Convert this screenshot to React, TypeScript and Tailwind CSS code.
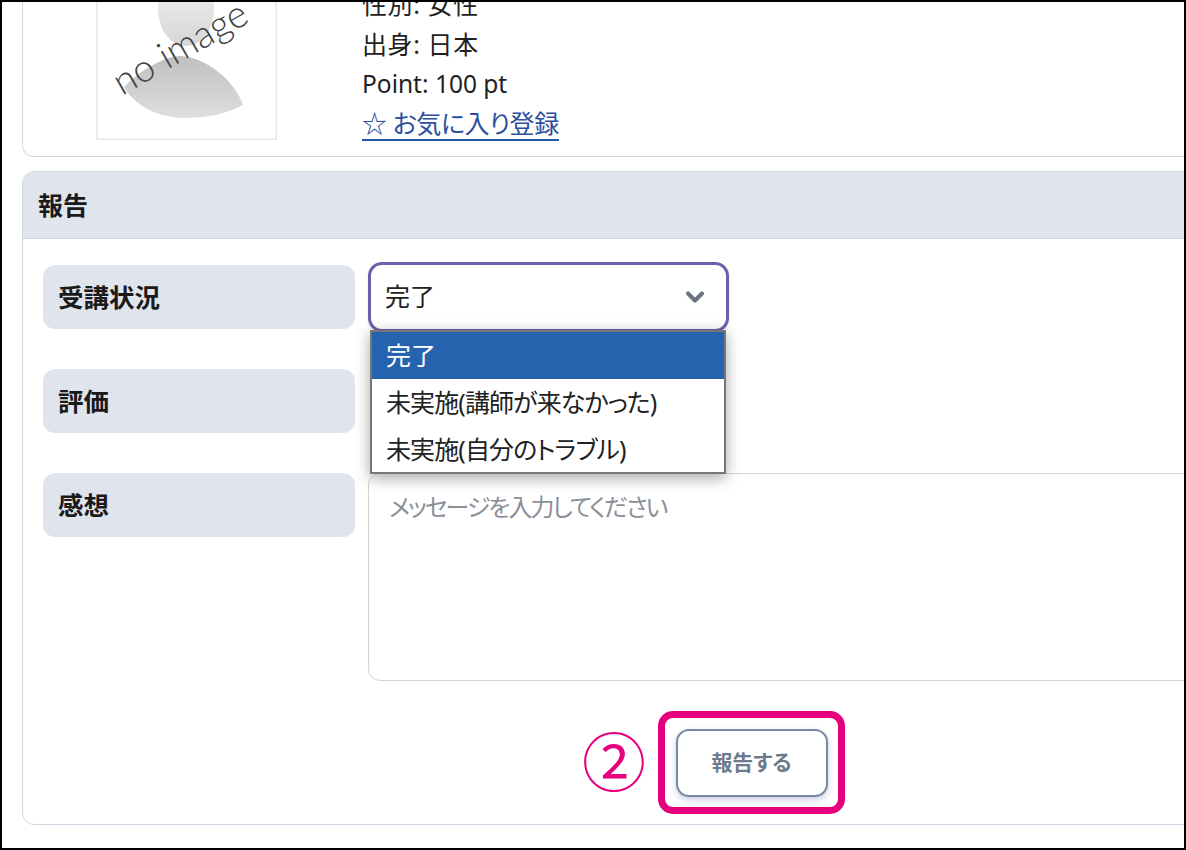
import React from "react";
import { ChevronDown } from "lucide-react";

const font = { fontFamily: '"Noto Sans", "Noto Sans CJK JP", sans-serif' };

function NoImage() {
  return (
    <svg width="181" height="181" viewBox="0 0 181 181" className="block">
      <defs>
        <linearGradient id="h" x1="0" y1="0" x2="0" y2="1">
          <stop offset="0" stopColor="#f4f4f4" />
          <stop offset="1" stopColor="#d6d6d6" />
        </linearGradient>
        <linearGradient id="b" x1="0" y1="0" x2="0" y2="1">
          <stop offset="0" stopColor="#bfbfbf" />
          <stop offset="1" stopColor="#dedede" />
        </linearGradient>
      </defs>
      <rect x="0.75" y="0.75" width="179.5" height="179.5" fill="#fff" stroke="#e6e6e6" strokeWidth="1.5" />
      <ellipse cx="90" cy="50" rx="28" ry="37" fill="url(#h)" />
      <path d="M28 128 C45 110 70 97 85 97 C115 100 140 125 147 146 C130 155 110 159 88 159 C60 159 38 145 28 128 Z" fill="url(#b)" />
      <text x="26" y="137" transform="rotate(-30 26 137)" fontFamily="Lato, sans-serif" fontWeight="300" fontSize="38" fill="#444">
        no image
      </text>
    </svg>
  );
}

function Label({ children }: { children: React.ReactNode }) {
  return (
    <div className="w-[312px] h-[64px] shrink-0 rounded-xl bg-[#e0e4ed] pl-[15px] pt-[14px] text-[25.5px] leading-[36px] font-bold text-[#1a1a1a]">
      {children}
    </div>
  );
}

export default function App() {
  return (
    <div style={font} className="relative w-[1186px] h-[850px] overflow-hidden bg-white border-2 border-black text-[25px] text-[#222] [font-feature-settings:'palt']">
      <div className="ml-5 w-[1300px]">
        {/* profile card */}
        <div className="-mt-[60px] h-[215px] rounded-b-xl border border-t-0 border-[#d0d8e6] pl-[73px] flex">
          <div className="mt-[17px] h-[181px]">
            <NoImage />
          </div>
          <div className="ml-[85px] pt-[43px] leading-[39.5px]">
            <div className="tracking-[0.6px]">性別: 女性</div>
            <div className="tracking-[0.6px]">出身: 日本</div>
            <div className="text-[24.5px]">Point: 100 pt</div>
            <a className="inline-block leading-[38px] h-[37px] tracking-[-0.4px] text-[#2b4f9e] border-b-2 border-[#2457a8]">☆ お気に入り登録</a>
          </div>
        </div>

        {/* report card */}
        <div className="mt-[14px] h-[654px] rounded-xl border border-[#d0d8e6] overflow-hidden">
          <div className="h-[67px] bg-[#e0e4ed] border-b border-[#d0d8e6] pl-[15px] pt-[15px] text-[25px] leading-[36px] font-bold text-[#1a1a1a]">
            報告
          </div>
          <div className="pl-5 pt-[26px] flex flex-col gap-10">
            <div className="flex h-[64px]">
              <Label>受講状況</Label>
              <div className="ml-[13px] -mt-[3px]">
                <div className="w-[361px] h-[70px] rounded-[14px] border-[3px] border-[#6b60ae] flex items-center justify-between pl-[14px] pr-[17px] shadow-sm">
                  <span>完了</span>
                  <ChevronDown size={28} strokeWidth={3.5} className="text-[#6b7280]" />
                </div>
              </div>
            </div>
            <div className="flex h-[64px]">
              <Label>評価</Label>
            </div>
            <div className="flex">
              <Label>感想</Label>
              <div className="ml-[13px] w-[900px] h-[208px] rounded-xl border border-[#d0d5dd] pl-5 pt-[15px] text-[24px] tracking-[-2px] text-[#8a8f98] leading-[36px]">
                メッセージを入力してください
              </div>
            </div>
          </div>
          <div className="mt-[30px] flex justify-start pl-[559px] items-center">
            <span className="w-[64px] pb-[10px] text-center text-[64px] leading-[80px] text-[#e6007e]" style={{ fontFamily: '"Noto Sans CJK JP", sans-serif', fontWeight: 400 }}>②</span>
            <div className="ml-[12px] w-[187px] h-[103px] rounded-[15px] border-[7px] border-[#e6007e] flex items-center justify-center">
              <div className="w-[152px] h-[68px] rounded-[13px] border-2 border-[#7688a4] bg-white shadow-[0_3px_6px_rgba(90,100,170,0.3)] flex items-center justify-center text-[21px] font-bold text-[#6b7a8c]">
                報告する
              </div>
            </div>
          </div>
        </div>
      </div>

      {/* open dropdown menu */}
      <div className="absolute left-[368px] top-[328px] w-[356px] h-[144px] bg-white border-2 border-[#767676] shadow-[0_4px_14px_rgba(0,0,0,0.35)] leading-[47px]">
        <div className="h-[47px] bg-[#2563ae] text-white pl-[14px]">完了</div>
        <div className="h-[47px] pl-[14px] tracking-[-0.9px]">未実施(講師が来なかった)</div>
        <div className="h-[47px] pl-[14px] tracking-[-0.9px]">未実施(自分のトラブル)</div>
      </div>
    </div>
  );
}
